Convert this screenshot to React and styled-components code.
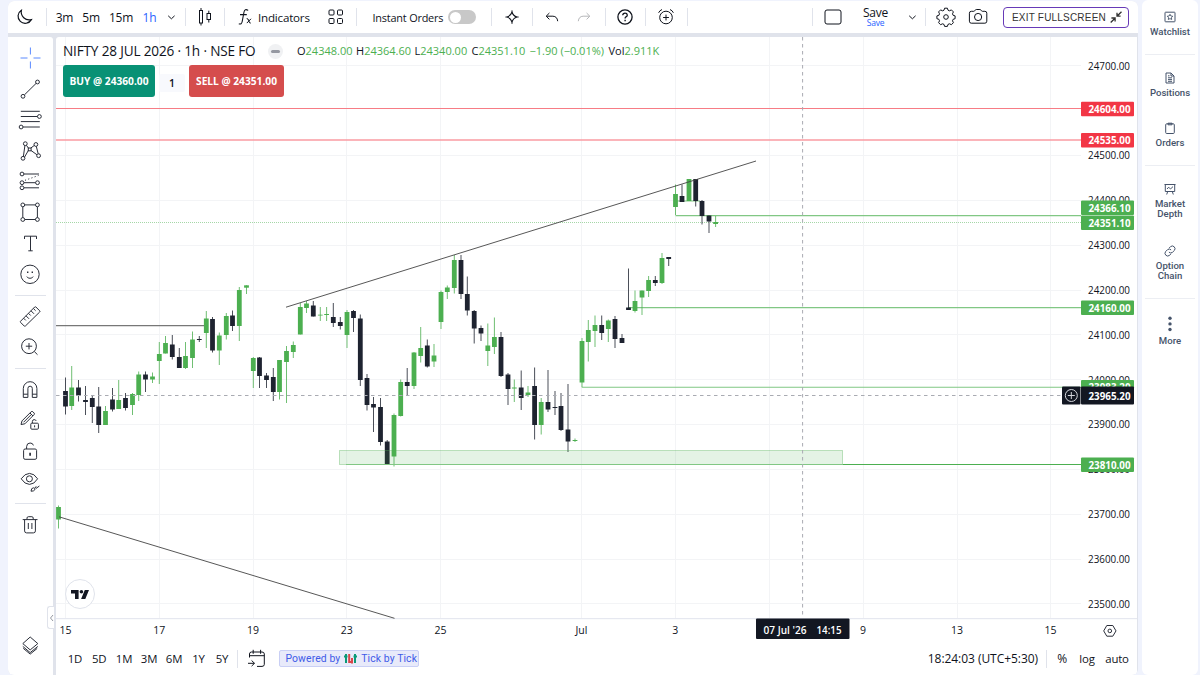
import styled, { createGlobalStyle, css } from "styled-components";

const GlobalStyle = createGlobalStyle`
  * {
    box-sizing: border-box;
  }
  body {
    margin: 0;
    background: #f0f3fd;
    color: #0f131c;
    font-family: "Open Sans", "Noto Sans", sans-serif;
    overflow: hidden;
  }
`;

const Page = styled.div`
  display: flex;
  width: 1200px;
  height: 675px;
  padding-left: 8px;
`;

const Terminal = styled.main`
  display: flex;
  flex-direction: column;
  width: 1130px;
  margin-top: 1px;
  background: #e0e3eb;
  border-radius: 6px;
  overflow: hidden;
`;

const TopBar = styled.header`
  display: flex;
  align-items: center;
  height: 32px;
  flex: none;
  background: #fff;
`;

const Slot = styled.div`
  display: flex;
  align-items: center;
  justify-content: ${(p) => p.$align || "center"};
  flex: none;
  width: ${(p) => p.$w}px;
  height: 32px;
  white-space: nowrap;
  font-size: ${(p) => p.$size || 12}px;
  font-weight: 500;
  letter-spacing: ${(p) => p.$ls || -0.2}px;
  color: ${(p) => (p.$active ? "#2962ff" : "#0f131c")};
  opacity: ${(p) => (p.$disabled ? 0.3 : 1)};
`;

const Sep = styled.div`
  width: 1px;
  height: 18px;
  flex: none;
  background: #e0e3eb;
`;

const Toggle = styled.div`
  width: 28px;
  height: 14px;
  padding: 1.5px;
  border-radius: 7px;
  background: #c8c8c8;

  &::before {
    content: "";
    display: block;
    width: 11px;
    height: 11px;
    border-radius: 50%;
    background: #fff;
  }
`;

const SaveBox = styled.div`
  display: flex;
  flex-direction: column;
  align-items: center;
  line-height: 11px;
  font-size: 12px;
  padding-bottom: 1px;

  small {
    font-size: 8.5px;
    line-height: 9px;
    color: #2962ff;
  }
`;

const ExitButton = styled.button`
  display: flex;
  align-items: center;
  justify-content: space-between;
  flex: none;
  width: 126px;
  height: 21px;
  margin-left: 7px;
  padding: 0 6px 0 8px;
  border: 1px solid #673ab7;
  border-radius: 4px;
  background: #fff;
  color: #333;
  font-family: "Liberation Sans", Arial, sans-serif;
  font-size: 10px;
  letter-spacing: 0.2px;
  white-space: nowrap;

  svg {
    flex: none;
  }
`;

const Body = styled.div`
  display: flex;
  flex: 1;
  margin-top: 4px;
`;

const Tools = styled.nav`
  display: flex;
  flex-direction: column;
  align-items: center;
  width: 44.5px;
  padding: 5.9px 0 13.6px;
  background: #fff;
  border-top-right-radius: 3px;
`;

const Tool = styled.div`
  display: flex;
  align-items: center;
  justify-content: center;
  width: 44px;
  height: 30.8px;
  color: ${(p) => (p.$active ? "#5b8aff" : "#2a2e39")};
  ${(p) =>
    p.$last &&
    css`
      margin-top: auto;
    `}
`;

const ToolSep = styled.div`
  width: 31px;
  height: 1px;
  margin: 5.4px 0;
  background: #e0e3eb;
`;

const Workspace = styled.section`
  position: relative;
  display: flex;
  flex-direction: column;
  width: 1081px;
  margin-left: 3.5px;
  background: #fff;
  border-radius: 3px 0 0 0;
`;

const Chart = styled.svg`
  display: block;
  width: 1081px;
  height: 606px;
`;

const AxisText = styled.text`
  font-family: "Open Sans", sans-serif;
  font-size: 10.5px;
  font-weight: ${(p) => p.$weight || 500};
  fill: ${(p) => p.$fill || "#0f131c"};
  text-anchor: ${(p) => p.$anchor || "start"};
`;

const Legend = styled.div`
  position: absolute;
  top: 5px;
  left: 7px;
`;

const TitleRow = styled.div`
  display: flex;
  align-items: center;
  height: 18px;
  white-space: nowrap;
`;

const Title = styled.div`
  width: 205px;
  padding-bottom: 1px;
  font-size: 13.6px;
  letter-spacing: -0.17px;
`;

const HidePill = styled.div`
  display: flex;
  align-items: center;
  justify-content: center;
  width: 15px;
  height: 15px;
  margin-right: 14px;
  border-radius: 50%;
  background: #f0f1f3;

  &::before {
    content: "";
    width: 9px;
    height: 3px;
    border-radius: 2px;
    background: #9598a1;
  }
`;

const Quote = styled.div`
  width: ${(p) => p.$w}px;
  padding-bottom: 1px;
  font-size: 11px;

  span {
    color: #4caf50;
  }
`;

const TradeRow = styled.div`
  display: flex;
  align-items: center;
  margin-top: 5px;
`;

const TradeButton = styled.button`
  width: ${(p) => p.$w}px;
  height: 32px;
  padding: 0;
  border: 0;
  border-radius: 3px;
  background: ${(p) => (p.$side === "buy" ? "#089175" : "#d54d4d")};
  color: #fff;
  font-family: inherit;
  font-size: 10.2px;
  font-weight: 700;
  white-space: nowrap;
`;

const Qty = styled.div`
  width: 26px;
  height: 18px;
  margin: 3px 4px 0;
  border-radius: 2px;
  background: #f8f9fd;
  font-size: 10.5px;
  font-weight: 600;
  line-height: 18px;
  text-align: center;
`;

const TvBadge = styled.div`
  position: absolute;
  left: 9px;
  top: 542px;
  display: flex;
  align-items: center;
  justify-content: center;
  width: 30px;
  height: 30px;
  border: 1px solid #e0e3eb;
  border-radius: 50%;
  background: #fff;
`;

const Handle = styled.div`
  position: absolute;
  left: -9px;
  top: 569px;
  width: 7px;
  height: 23px;
  display: flex;
  align-items: center;
  justify-content: center;
  border: 1px solid #e0e3eb;
  border-right: 0;
  border-radius: 3px 0 0 3px;
  background: #fff;
  color: #9598a1;
`;

const BottomBar = styled.footer`
  display: flex;
  align-items: center;
  height: 32px;
  padding-bottom: 1px;
`;

const Powered = styled.div`
  display: flex;
  align-items: center;
  gap: 4px;
  width: 140px;
  height: 17px;
  margin-left: 3px;
  padding: 0 6px;
  border: 1px solid #c9cff5;
  border-radius: 2px;
  background: #e8eafa;
  color: #3f5be8;
  font-family: Roboto, sans-serif;
  font-size: 10.4px;
  letter-spacing: 0.1px;
  white-space: nowrap;

  svg {
    flex: none;
  }
`;

const Spacer = styled.div`
  flex: 1;
`;

const Rail = styled.aside`
  display: flex;
  flex-direction: column;
  width: 56px;
  margin-left: 4px;
  border-radius: 6px;
  background: #fff;
`;

const RailItem = styled.div`
  display: flex;
  flex-direction: column;
  align-items: center;
  height: ${(p) => p.$h}px;
  padding-top: ${(p) => p.$top}px;
  color: #45536a;
  font-family: Roboto, sans-serif;
  font-size: 9.6px;
  font-weight: 500;
  line-height: 10.4px;
  text-align: center;

  svg {
    margin-bottom: 4px;
    flex: none;
  }
`;

const RailSep = styled.div`
  width: 50px;
  height: 1px;
  flex: none;
  margin: 0 auto;
  background: #eceef3;
`;

const Glyph = ({ size = 24, children, sw = 1, ...rest }) => (
  <svg width={size} height={size} viewBox={`0 0 ${size} ${size}`} fill="none" stroke="currentColor" strokeWidth={sw} {...rest}>
    {children}
  </svg>
);

const icons = {
  cross: <path d="M12.4 1.5v7M12.4 15.5v7M2.5 12h7M15.5 12h7" />,
  trend: (
    <>
      <circle cx="5" cy="19.3" r="1.9" />
      <circle cx="19.5" cy="5" r="1.9" />
      <path d="M6.4 17.9 18.1 6.4" />
    </>
  ),
  fib: (
    <>
      <path d="M2.8 3.3h19M2.8 8.5h16.7M2.8 13.6h19M5 19h16.8" />
      <circle cx="21.4" cy="8.5" r="1.9" />
      <circle cx="3.1" cy="19" r="1.9" />
    </>
  ),
  pattern: (
    <>
      <circle cx="7.3" cy="4.7" r="1.9" />
      <circle cx="17.9" cy="5.5" r="1.9" />
      <circle cx="20.6" cy="16.7" r="1.9" />
      <circle cx="5" cy="19.3" r="1.9" />
      <path d="M6.9 6.6 5.4 17.4M6.5 18.2l4-7M8.4 6.3l2.2 3M12.8 9l3.6-2.6M18.3 7.4l1.9 7.4M13.2 11.6l5.8 4.2" />
      <rect x="10.3" y="9" width="2.8" height="2.8" />
    </>
  ),
  forecast: (
    <>
      <circle cx="4" cy="5" r="1.9" />
      <circle cx="4" cy="13.7" r="1.9" />
      <circle cx="19.5" cy="13.7" r="1.9" />
      <circle cx="4" cy="18.8" r="1.9" />
      <path d="M6 5h15M6 13.7h11.5M6 18.8h15" />
      <path d="M7 11.3 20.5 6.5" strokeDasharray="1.1 2.3" />
    </>
  ),
  rect: (
    <>
      <circle cx="4.8" cy="4.9" r="1.9" />
      <circle cx="19.4" cy="4.9" r="1.9" />
      <circle cx="4.8" cy="19.5" r="1.9" />
      <circle cx="19.4" cy="19.5" r="1.9" />
      <path d="M6.7 4.9h10.8M6.7 19.5h10.8M4.8 6.8v10.8M19.4 6.8v10.8" />
    </>
  ),
  text: <path d="M6.5 8V5.2h12V8M12.5 5.2v14.6M10.3 19.8h4.4" />,
  smile: (
    <>
      <circle cx="12" cy="12.3" r="9.2" />
      <path d="M8.8 14.6c1.2 2.2 5.2 2.2 6.4 0" />
      <path d="M9 10.3h1.4M13.6 10.3H15" strokeWidth="1.4" />
    </>
  ),
  ruler: (
    <>
      <path d="M2.6 17.2 16.7 3q.6-.6 1.2 0l3.8 3.8q.6.6 0 1.2L7.4 22q-.6.6-1.2 0l-3.6-3.6q-.6-.6 0-1.2z" />
      <path d="M5.6 14.2l2.2 2.2M8 11.8l3 3M10.5 9.3l2.2 2.2M13 6.8l3 3M15.4 4.5l2.2 2.2" />
    </>
  ),
  zoom: (
    <>
      <circle cx="11" cy="11.2" r="7.4" />
      <path d="M16.3 16.5l3.2 3.2M11 8v6.4M7.8 11.2h6.4" />
    </>
  ),
  magnet: <path d="M5.3 19.4V10.5a6.8 6.8 0 0 1 13.6 0v8.9h-4.6v-9a2.2 2.2 0 0 0-4.4 0v9zM5.3 16.2h4.6M14.3 16.2h4.6" />,
  pencilLock: (
    <>
      <path d="M3 15.5l1-3.6L13.2 2.7q.8-.6 1.6 0l1.3 1.3q.7.8 0 1.6L6.9 14.8zM12 4l3 3M5.5 13.3l8-8" />
      <rect x="12.8" y="14.2" width="7.6" height="6" rx="1" />
      <path d="M14.4 14v-1.6q.1-1.8 1.8-1.8 1.5 0 2 1.3M16.6 16.3v2" />
    </>
  ),
  lock: (
    <>
      <rect x="5.6" y="10" width="13" height="10.3" rx="1.5" />
      <path d="M8.6 10V7.6q.2-3.6 3.5-3.6 2.8 0 3.3 2.4" />
      <path d="M12.1 13.7v3" strokeWidth="1.7" />
    </>
  ),
  eye: (
    <>
      <path d="M3.2 8.8Q6.8 3.4 11.5 3.4t8.1 5.4q-3.4 5.6-8.1 5.6T3.2 8.8z" />
      <circle cx="11.4" cy="8.8" r="3" />
      <path d="M13 21.2q.2-3.4 2.5-3.4 2 .3 1.3 2-1 1.6-3.8 1.4zM17 18l1.2-1.7M17.8 18.6l3.6-2.6" />
    </>
  ),
  trash: (
    <path d="M4.7 6.6h14.8M6.6 6.6v11.3q0 2 2 2h6.8q2 0 2-2V6.6M9 6.4V5q.1-1.3 1.3-1.3h3.6q1.2 0 1.3 1.3v1.4M10.3 10v6M13.9 10v6" />
  ),
  layers: (
    <path d="M4.8 9.6 12.2 3l7.6 6.6-7.6 6.3zM4.8 12.4l7.4 6.2 7.6-6.2M5.3 14.4l6.9 5.7 7-5.7" />
  ),
  moon: <path d="M8.4 5.2A7.1 7.1 0 1 0 18.4 14.6 8 8 0 0 1 8.4 5.2z" strokeWidth="1.2" />,
  chevron: <path d="M9.2 10.8l3.2 3 3.2-3" />,
  candles: (
    <>
      <rect x="6.5" y="5.5" width="3" height="12.5" />
      <rect x="14" y="8.5" width="3.5" height="6" />
      <path d="M8 3v2.5M8 18v2.5M15.8 5.7v2.8M15.8 14.5v3" />
    </>
  ),
  fx: (
    <>
      <path d="M14.2 5.4q-3.4-2.2-4.2 1.6L8.2 16.5q-.6 3.3-3.4 2.2M6 9.6h6.8" strokeWidth="1.1" />
      <path d="M12.7 13.6q1.6-.3 2.1 2.3t2 2.2M17 13.8l-4.2 4.3" />
    </>
  ),
  grid: (
    <>
      <rect x="5" y="5" width="5" height="5" rx="1" />
      <rect x="13.5" y="5" width="5" height="5" rx="1" />
      <rect x="5" y="13.5" width="5" height="5" rx="1" />
      <rect x="13.5" y="13.5" width="5" height="5" rx="1" />
    </>
  ),
  diamond: <path d="M12 7q1.2 4 5 5-3.8 1-5 5-1.2-4-5-5 3.8-1 5-5zM12 5.5V7M12 17v1.7M5.5 12H7M17 12h1.6" strokeWidth="1.1" />,
  undo: <path d="M6.3 11.2h6.6q4.3.2 4.8 5M9.4 8 6.2 11.2l3.2 3.2" />,
  redo: <path d="M17.7 11.2h-6.6q-4.3.2-4.8 5M14.6 8l3.2 3.2-3.2 3.2" />,
  help: (
    <>
      <circle cx="12" cy="12" r="7.1" strokeWidth="1.3" />
      <path d="M9.7 10.3q.2-2.1 2.3-2.1t2.3 1.9q0 1.2-1.3 1.8-.9.4-.9 1.6" strokeWidth="1.3" />
      <path d="M12.1 14.8v1.4" strokeWidth="1.4" />
    </>
  ),
  alarm: (
    <>
      <circle cx="12" cy="12.5" r="6.3" />
      <path d="M12 9.6v5.8M9.1 12.5h5.8M4.6 7.8Q5.6 5.5 8 4.5M19.4 7.8Q18.4 5.5 16 4.5" />
    </>
  ),
  square: <rect x="4" y="5" width="16" height="14" rx="2" />,
  gear: (
    <>
      <circle cx="12" cy="12" r="2.3" />
      <path
        d="M10.6 3.8h2.8l.6 2 1.5.6 1.9-.9 2 2-.9 1.9.6 1.5 2 .6v2.8l-2 .6-.6 1.5.9 1.9-2 2-1.9-.9-1.5.6-.6 2h-2.8l-.6-2-1.5-.6-1.9.9-2-2 .9-1.9-.6-1.5-2-.6v-2.8l2-.6.6-1.5-.9-1.9 2-2 1.9.9 1.500-.6z"
        transform="translate(0 -.6)"
        strokeLinejoin="round"
      />
    </>
  ),
  camera: (
    <>
      <path d="M5.3 6.3h2.5q.8 0 1.2-.9.5-.9 1.3-.9h3.6q.8 0 1.3.9.4.9 1.2.9h2.5q1.9 0 1.9 1.9v8q0 2-1.9 2H5.3q-1.9 0-1.9-2v-8q0-1.9 1.9-1.9z" />
      <circle cx="12.1" cy="12" r="3.6" />
    </>
  ),
  calendar: (
    <path d="M4.5 10.5V7q0-2 2-2H17q2.3 0 2.3 2v10.4q0 2-2.3 2h-5M4.5 8.7h14.8M8.2 2.8v4M15.6 2.8v4M3 16.3h6.3M6.6 13.5l2.9 2.8-2.9 2.8" />
  ),
};

// x, high, body top, body bottom, low, up
const candles = [
  [58.5, 505.5, 507, 519.5, 528.5, 1],
  [65.5, 377.5, 391, 406.5, 414.5, 0],
  [71.7, 366, 387.5, 406, 410, 1],
  [78.5, 380, 387.5, 395.5, 401.5, 0],
  [85.5, 386, 400, 402, 415, 0],
  [92.3, 395, 398, 407, 423, 0],
  [98.7, 387, 406.5, 425, 433, 0],
  [105.5, 406, 411, 425, 425, 1],
  [112.5, 388, 399.5, 409.5, 411.5, 0],
  [118.7, 380, 400, 409, 409, 1],
  [125.5, 393, 398, 408, 410.5, 0],
  [132.5, 393, 394, 405, 415, 1],
  [138.7, 371.5, 374.5, 395, 401, 1],
  [145.5, 371.5, 374.5, 379.5, 392, 0],
  [152.5, 372.5, 376.5, 379.5, 383, 1],
  [159.3, 342, 354, 361, 384, 1],
  [165.5, 336, 343, 353.5, 353.5, 1],
  [172.3, 335, 344.5, 357, 359.5, 0],
  [179.3, 348, 357, 368, 368, 0],
  [185.5, 342, 356, 368, 369, 1],
  [192.5, 331.5, 339.5, 358, 368, 1],
  [199.3, 336, 339, 340, 342, 0],
  [206.3, 311, 318.5, 333, 348, 1],
  [212.5, 317, 319, 350.5, 352.5, 0],
  [219.3, 332.5, 335.5, 350.5, 365, 1],
  [226.3, 313, 316, 335, 339.5, 1],
  [232.5, 310.5, 315.5, 326, 331, 0],
  [239.3, 287, 290, 326, 341, 1],
  [246.5, 285.3, 285.3, 287.7, 294, 1],
  [253.3, 357, 358, 371, 388, 1],
  [259.5, 357, 357.5, 376, 388, 0],
  [266.5, 373, 375.5, 380, 388, 0],
  [273.3, 368, 377, 392, 401, 0],
  [279.5, 360, 360, 392, 399.5, 1],
  [286.5, 346, 351, 362, 403, 1],
  [293.3, 341.5, 345, 352, 358, 1],
  [300.3, 303, 307, 334.5, 334.5, 1],
  [306.5, 301, 303.5, 308, 313, 1],
  [313.3, 301, 305.5, 316.5, 316.5, 0],
  [320.3, 307, 314.7, 315.5, 321, 1],
  [326.6, 307, 314, 315, 321, 1],
  [333.3, 303, 317, 323, 327, 0],
  [340.3, 317, 322, 326, 329.5, 0],
  [347, 310, 312, 335, 348, 1],
  [353.5, 310, 311, 318, 332, 0],
  [360.3, 314.5, 318.5, 380, 386, 0],
  [367, 374, 378, 405, 410.5, 0],
  [373.5, 397, 404, 407.5, 432, 0],
  [380.5, 398, 407, 442, 445.5, 0],
  [387.2, 440, 441.5, 465, 465, 0],
  [394, 413.5, 415, 456.5, 466.5, 1],
  [400.7, 379.5, 382, 416, 416.5, 1],
  [407.2, 368, 382, 386, 395, 0],
  [414, 352, 352.5, 386, 389, 1],
  [420.7, 327, 348, 356, 362.5, 1],
  [427.3, 339.5, 345.5, 366.5, 367.5, 0],
  [434, 344, 355.5, 361.5, 367, 1],
  [441, 290.5, 292, 322, 329, 1],
  [447.3, 285.5, 287.5, 292, 299, 1],
  [454.3, 255, 260, 288, 293.5, 1],
  [461, 255, 260, 294, 299, 0],
  [467.3, 276.5, 294, 310.5, 315.5, 0],
  [474.2, 310, 311, 328.5, 343.5, 0],
  [481, 325.5, 328, 333.5, 341, 0],
  [487.8, 323.5, 345.5, 351, 366, 1],
  [494.4, 317.5, 337, 347, 354, 1],
  [501, 332, 337, 376, 377, 0],
  [508, 373, 374.5, 389, 405, 0],
  [514.3, 379.5, 387.5, 388.5, 402, 1],
  [521.2, 370.5, 387.5, 398, 410, 0],
  [528, 386, 392.5, 395, 397, 1],
  [534.6, 367.5, 386, 425, 439.5, 0],
  [541.2, 398, 402, 425, 434.5, 1],
  [548, 370, 402, 409.5, 412, 0],
  [555, 391, 407, 408, 415, 0],
  [561, 393, 406, 430, 431, 0],
  [568, 384, 429.5, 441.5, 452, 0],
  [575, 438.5, 440, 441, 442, 1],
  [582, 338, 341, 382.5, 387, 1],
  [588.3, 320, 330, 342, 361.5, 1],
  [595, 315.5, 325, 331, 347, 1],
  [601.7, 315.5, 325, 333, 340, 0],
  [608.3, 319.5, 320.5, 329, 342, 1],
  [615, 316, 319, 339, 348, 0],
  [622, 334, 338, 343, 343, 0],
  [628.5, 268.5, 307.5, 310, 310, 0],
  [635, 290.5, 301, 311, 312.5, 1],
  [642, 290.5, 290.5, 297.5, 315, 1],
  [648.6, 276, 280, 291, 297, 1],
  [655.3, 276, 280, 283, 286, 0],
  [662, 253, 258, 283, 284, 1],
  [668.7, 257, 257, 259, 266, 0],
  [675.5, 184.5, 194, 207, 215, 1],
  [682, 184.5, 196, 202, 202, 0],
  [689, 179, 179, 201, 201, 1],
  [695.7, 179, 179, 201, 206.5, 0],
  [702, 200, 201, 216, 224.5, 0],
  [709, 215.5, 215.5, 221.5, 233, 0],
  [715.6, 216, 222, 224, 227, 1],
];

const prices = [24700, 24500, 24400, 24300, 24200, 24100, 24000, 23900, 23800, 23700, 23600, 23500];
const priceY = (p) => 65.9 + (24700 - p) * 0.4483;

const days = [
  [65.5, "15"],
  [159.2, "17"],
  [253, "19"],
  [346.7, "23"],
  [440.5, "25"],
  [581.5, "Jul"],
  [675.3, "3"],
  [769.2, ""],
  [863, "9"],
  [957, "13"],
  [1050.5, "15"],
];

const tags = [
  [109, "24604.00", "#f23645"],
  [140.2, "24535.00", "#f23645"],
  [207.8, "24366.10", "#4caf50"],
  [222.8, "24351.10", "#4caf50"],
  [307.9, "24160.00", "#4caf50"],
  [387.3, "23983.20", "#4caf50"],
  [464.9, "23810.00", "#4caf50"],
];

const PriceChart = () => (
  <Chart viewBox="56 37 1081 606">
    <g fill="#f3f4f6">
      {prices.map((p) => (
        <rect key={p} x="56" y={Math.floor(priceY(p))} width="1025" height="1" />
      ))}
      {days.map(([x]) => (
        <rect key={x} x={Math.floor(x)} y="37" width="1" height="581" />
      ))}
    </g>
    <rect x="56" y="618" width="1081" height="1.2" fill="#e6e8f0" />

    <path d="M56 108.5H1081" stroke="#f77c85" />
    <path d="M56 140H1081" stroke="#fa9ba2" strokeWidth="1.5" />
    <path d="M56 222.5H1081" stroke="#a5d7a7" strokeDasharray="1 1" />
    <path d="M675.5 215.6H1081M628 307.6H1081M581.7 387.3H1081M675.5 201H700" stroke="#81c784" strokeWidth="1.1" fill="none" />
    <path d="M56 325.7H206" stroke="#777" strokeWidth="1.3" />

    {candles.map(([x, hi, top, bottom, lo, up]) => (
      <g key={x} fill={up ? "#4caf50" : "#1e2330"}>
        <rect x={x - 0.5} y={hi} width="1" height={lo - hi} opacity="0.8" />
        <rect x={x - 2.4} y={top} width="4.8" height={bottom - top} />
      </g>
    ))}

    <rect x="339.5" y="450.5" width="503" height="14" fill="#4caf50" fillOpacity="0.15" stroke="#4caf50" strokeOpacity="0.35" />
    <path d="M346 464.5H843" stroke="#81c784" strokeWidth="1.2" />
    <path d="M843 464.5H1081" stroke="#4caf50" strokeWidth="1.2" />
    <path d="M286 307.2 756 161M59 516.8 394.5 618.3" stroke="#444" strokeWidth="0.9" />

    <path d="M802.6 37V618" stroke="#a9abb2" strokeDasharray="3.5 3.5" />
    <path d="M56 395.5H1062" stroke="#a9abb2" strokeDasharray="3.5 3.5" />

    {prices.map((p) => (
      <AxisText key={p} x="1088" y={priceY(p) + 3.8} textLength="42" lengthAdjust="spacingAndGlyphs">
        {p}.00
      </AxisText>
    ))}
    {tags.map(([y, label, color]) => (
      <g key={label}>
        <rect x="1081" y={y - 7.3} width="53" height="14.5" rx="1" fill={color} />
        <AxisText x="1088.5" y={y + 3.8} textLength="42" lengthAdjust="spacingAndGlyphs" $weight={700} $fill="#fff">
          {label}
        </AxisText>
      </g>
    ))}
    <rect x="1062" y="386.5" width="18.5" height="18" rx="1" fill="#131722" />
    <rect x="1081" y="386.5" width="53" height="18" rx="1" fill="#131722" />
    <g fill="none" stroke="#d5d7dd">
      <circle cx="1071.3" cy="395.5" r="6" />
      <path d="M1071.3 392v7M1067.8 395.5h7" />
    </g>
    <AxisText x="1088.5" y="399.5" textLength="42" lengthAdjust="spacingAndGlyphs" $weight={700} $fill="#fff">
      23965.20
    </AxisText>

    {days.map(([x, label]) => (
      <AxisText key={x} x={x} y="634.3" $anchor="middle">
        {label}
      </AxisText>
    ))}
    <rect x="756" y="618.5" width="93.5" height="20.5" rx="1" fill="#131722" />
    <AxisText x="763.5" y="634.3" textLength="43" lengthAdjust="spacingAndGlyphs" $weight={600} $fill="#fff">
      07 Jul '26
    </AxisText>
    <AxisText x="816.5" y="634.3" textLength="25" lengthAdjust="spacingAndGlyphs" $weight={600} $fill="#fff">
      14:15
    </AxisText>
    <g fill="none" stroke="#2a2e39">
      <path d="M1106.8 625.5h6l3.2 5.4-3.2 5.3h-6l-3.1-5.3z" />
      <circle cx="1109.8" cy="630.9" r="1.8" />
    </g>
  </Chart>
);

const ranges = [
  ["1D", 24],
  ["5D", 24.5],
  ["1M", 25],
  ["3M", 25],
  ["6M", 25],
  ["1Y", 24],
  ["5Y", 23],
];

const toolGroups = [
  ["cross", "trend", "fib", "pattern", "forecast", "rect", "text", "smile"],
  ["ruler", "zoom"],
  ["magnet", "pencilLock", "lock", "eye"],
  ["trash"],
];

const quotes = [
  ["O", "24348.00", 59],
  ["H", "24364.60", 58.5],
  ["L", "24340.00", 57],
  ["C", "24351.10", 58],
  ["", "−1.90 (−0.01%)", 79],
  ["Vol", "2.911K", 52],
];

const Header = () => (
  <TopBar>
    <Slot $w={34}><Glyph>{icons.moon}</Glyph></Slot>
    <Slot $w={3.5} />
    <Sep />
    <Slot $w={36}>3m</Slot>
    <Slot $w={17}>5m</Slot>
    <Slot $w={43}>15m</Slot>
    <Slot $w={14} $active>1h</Slot>
    <Slot $w={28}><Glyph>{icons.chevron}</Glyph></Slot>
    <Sep />
    <Slot $w={38.5}><Glyph>{icons.candles}</Glyph></Slot>
    <Sep />
    <Slot $w={8} />
    <Slot $w={25}><Glyph>{icons.fx}</Glyph></Slot>
    <Slot $w={54} $align="flex-start" $size={11.6}>Indicators</Slot>
    <Slot $w={4} />
    <Slot $w={40}><Glyph>{icons.grid}</Glyph></Slot>
    <Sep />
    <Slot $w={15.5} />
    <Slot $w={75.5} $align="flex-start" $size={10.9}>Instant Orders</Slot>
    <Toggle />
    <Slot $w={14.5} />
    <Sep />
    <Slot $w={40}><Glyph>{icons.diamond}</Glyph></Slot>
    <Sep />
    <Slot $w={39}><Glyph>{icons.undo}</Glyph></Slot>
    <Slot $w={24} $disabled><Glyph>{icons.redo}</Glyph></Slot>
    <Slot $w={9} />
    <Sep />
    <Slot $w={39}><Glyph>{icons.help}</Glyph></Slot>
    <Sep />
    <Slot $w={41}><Glyph>{icons.alarm}</Glyph></Slot>
    <Sep />
    <Spacer />
    <Sep />
    <Slot $w={40}><Glyph>{icons.square}</Glyph></Slot>
    <Slot $w={46}>
      <SaveBox>
        Save<small>Save</small>
      </SaveBox>
    </Slot>
    <Slot $w={26.5}><Glyph>{icons.chevron}</Glyph></Slot>
    <Sep />
    <Slot $w={40}><Glyph>{icons.gear}</Glyph></Slot>
    <Slot $w={24}><Glyph>{icons.camera}</Glyph></Slot>
    <Slot $w={6} />
    <ExitButton>
      EXIT FULLSCREEN
      <Glyph size={12} sw={1.3}>
        <path d="M11.5.8 7.2 5M7 1.7v3.5h3.6M.7 11.5 5 7.2M1.4 7h3.7v3.6" />
      </Glyph>
    </ExitButton>
    <Slot $w={9} />
  </TopBar>
);

const SideRail = () => (
  <Rail>
    <RailItem $h={54} $top={11}>
      <Glyph size={12}>
        <rect x="1" y="1.2" width="10" height="9.6" rx=".6" />
        <path d="M6 3.3l.9 1.7 1.9.3-1.4 1.3.3 1.9L6 7.6l-1.700.9.3-1.900-1.400-1.300 1.900-.3z" strokeWidth=".9" />
      </Glyph>
      Watchlist
    </RailItem>
    <RailSep />
    <RailItem $h={50} $top={17}>
      <Glyph size={12}>
        <path d="M2 1h5l3 3v7H2zM7 1v3h3M4 5.8h4M4 7.6h4M4 9.3h4M4 3.8h1.5" />
      </Glyph>
      Positions
    </RailItem>
    <RailItem $h={60} $top={17}>
      <Glyph size={12}>
        <rect x="1.7" y="1.8" width="8.6" height="9.7" rx="1" />
        <path d="M4 1.2h4v1.6H4z" />
      </Glyph>
      Orders
    </RailItem>
    <RailSep />
    <RailItem $h={62} $top={17}>
      <Glyph size={12}>
        <path d="M.5 1.5h11M1.3 1.5v7h9.4v-7M3.7 8.5l-1 3M8.3 8.5l1 3M3 6l1.7-1.8L6.5 6 9 3.6" />
      </Glyph>
      Market<br />Depth
    </RailItem>
    <RailItem $h={70} $top={16.5}>
      <Glyph size={12}>
        <path d="M5 3.2 6.7 1.5q1.9-1.3 3.5.3t.3 3.5L8.4 7.4Q6.5 8.7 4.9 7.1M7 8.8l-1.7 1.7q-1.9 1.3-3.5-.3t-.3-3.5l2.1-2.1q1.9-1.3 3.5.3" />
      </Glyph>
      Option<br />Chain
    </RailItem>
    <RailSep />
    <RailItem $h={60} $top={17}>
      <Glyph size={16} stroke="none" fill="currentColor">
        <circle cx="8" cy="2.3" r="1.7" />
        <circle cx="8" cy="7.9" r="1.7" />
        <circle cx="8" cy="13.5" r="1.7" />
      </Glyph>
      More
    </RailItem>
  </Rail>
);

const App = () => {
  return (
    <>
      <GlobalStyle />
      <Page>
        <Terminal>
          <Header />
          <Body>
            <Tools>
              {toolGroups.map((group, i) => [
                i > 0 && <ToolSep key={i} />,
                ...group.map((name) => (
                  <Tool key={name} $active={name === "cross"}>
                    <Glyph>{icons[name]}</Glyph>
                  </Tool>
                )),
              ])}
              <Tool $last>
                <Glyph>{icons.layers}</Glyph>
              </Tool>
            </Tools>
            <Workspace>
              <PriceChart />
              <Legend>
                <TitleRow>
                  <Title>NIFTY 28 JUL 2026 · 1h · NSE FO</Title>
                  <HidePill />
                  {quotes.map(([name, value, w]) => (
                    <Quote key={value} $w={w}>
                      {name}<span>{value}</span>
                    </Quote>
                  ))}
                </TitleRow>
                <TradeRow>
                  <TradeButton $w={92} $side="buy">BUY @ 24360.00</TradeButton>
                  <Qty>1</Qty>
                  <TradeButton $w={95} $side="sell">SELL @ 24351.00</TradeButton>
                </TradeRow>
              </Legend>
              <TvBadge>
                <svg width="19" height="11" viewBox="0 0 19 11" fill="#131722">
                  <path d="M0 1h7.6v9H4V4.5H0zM13.8 1H18l-3.7 9h-4.2z" />
                  <circle cx="10.4" cy="2.8" r="1.8" />
                </svg>
              </TvBadge>
              <Handle>
                <svg width="5" height="8" viewBox="0 0 5 8" fill="none" stroke="currentColor">
                  <path d="M4 1 1.5 4 4 7" />
                </svg>
              </Handle>
              <BottomBar>
                <Slot $w={7} />
                {ranges.map(([label, w]) => (
                  <Slot key={label} $w={w} $size={11.4}>{label}</Slot>
                ))}
                <Slot $w={3} />
                <Sep />
                <Slot $w={38}><Glyph>{icons.calendar}</Glyph></Slot>
                <Powered>
                  Powered by
                  <svg width="13" height="10" viewBox="0 0 13 10" strokeWidth="2" fill="none">
                    <path d="M2 0v9M0 2.5h3.5M11 0v9M9.5 2.5H13" stroke="#0a9a78" />
                    <path d="M5.2 0v9M8 4v5.5M5.2 8h3" stroke="#d9474b" />
                  </svg>
                  Tick by Tick
                </Powered>
                <Spacer />
                <Slot $w={111} $align="flex-end" $ls={-0.05}>18:24:03 (UTC+5:30)</Slot>
                <Slot $w={8} />
                <Sep />
                <Slot $w={30}>%</Slot>
                <Slot $w={20} $size={11.4}>log</Slot>
                <Slot $w={40} $size={11.4}>auto</Slot>
              </BottomBar>
            </Workspace>
          </Body>
        </Terminal>
        <SideRail />
      </Page>
    </>
  );
};

export default App;
